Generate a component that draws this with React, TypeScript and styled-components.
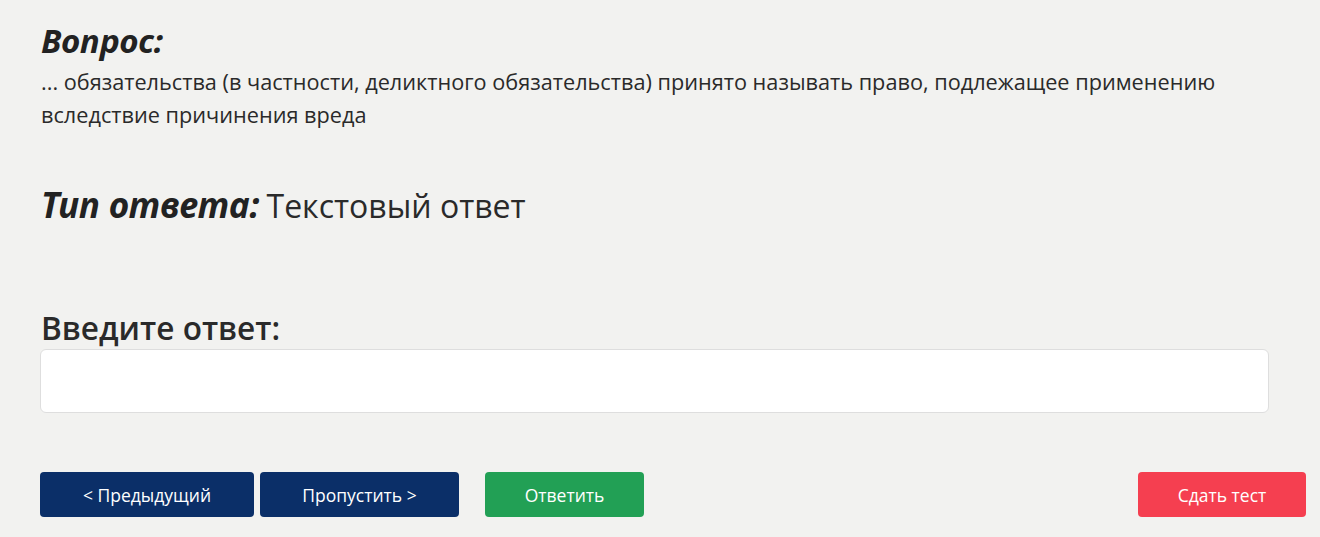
import React from "react";
import styled, { createGlobalStyle } from "styled-components";

const Global = createGlobalStyle`
  html, body { margin: 0; padding: 0; background: #f2f2f0; }
  body { font-family: "Open Sans", "Noto Sans", sans-serif; color: #222; }
`;

const Page = styled.div`
  padding: 22px 14px 20px 41px;
  box-sizing: border-box;
  width: 1320px;
  min-height: 537px;
`;

const Label = styled.span<{ $size: number }>`
  font-family: "Noto Sans", "Open Sans", sans-serif;
  font-style: italic;
  font-weight: 700;
  font-size: ${(p) => p.$size}px;
`;

const QuestionBlock = styled.section`
  display: flex;
  flex-direction: column;
`;

const QuestionTitle = styled.div`
  line-height: 36px;
  margin-top: 1px;
`;

const QuestionText = styled.p`
  margin: 0;
  font-size: 21.7px;
  line-height: 33px;
  width: 1240px;
  color: #2a2a2a;
`;

const TypeRow = styled.div`
  margin-top: 52px;
  display: flex;
  align-items: baseline;
  gap: 7px;
  line-height: 44px;
`;

const TypeValue = styled.span`
  font-size: 32px;
  color: #2a2a2a;
`;

const AnswerLabel = styled.label`
  display: block;
  margin-top: 80px;
  font-size: 31.6px;
  font-weight: 600;
  line-height: 40px;
  color: #2a2a2a;
`;

const AnswerInput = styled.input`
  display: block;
  box-sizing: border-box;
  margin: 1px 0 0 -1px;
  width: 1229px;
  height: 64px;
  border: 1px solid #dedede;
  border-radius: 6px;
  background: #fff;
  outline: none;
  font-size: 20px;
  padding: 0 14px;
`;

const ButtonRow = styled.div`
  margin-top: 59px;
  margin-left: -1px;
  display: flex;
  align-items: center;
`;

const Button = styled.button<{ $bg: string; $w: number; $ml?: number }>`
  width: ${(p) => p.$w}px;
  height: 45px;
  margin-left: ${(p) => p.$ml ?? 0}px;
  background: ${(p) => p.$bg};
  color: #fff;
  border: none;
  border-radius: 4px;
  font-family: "Open Sans", "Noto Sans", sans-serif;
  font-size: 17.5px;
  cursor: pointer;
`;

const Spacer = styled.div`
  flex: 1;
`;

export default function App() {
  return (
    <>
      <Global />
      <Page>
        <QuestionBlock>
          <QuestionTitle>
            <Label $size={33}>Вопрос:</Label>
          </QuestionTitle>
          <QuestionText>
            ... обязательства (в частности, деликтного обязательства) принято называть право, подлежащее применению
            <br />
            вследствие причинения вреда
          </QuestionText>
        </QuestionBlock>
        <TypeRow>
          <Label $size={35}>Тип ответа:</Label>
          <TypeValue>Текстовый ответ</TypeValue>
        </TypeRow>
        <AnswerLabel htmlFor="answer">Введите ответ:</AnswerLabel>
        <AnswerInput id="answer" type="text" />
        <ButtonRow>
          <Button $bg="#0b2f68" $w={214}>&lt; Предыдущий</Button>
          <Button $bg="#0b2f68" $w={199} $ml={6}>Пропустить &gt;</Button>
          <Button $bg="#22a055" $w={159} $ml={26}>Ответить</Button>
          <Spacer />
          <Button $bg="#f53f50" $w={168}>Сдать тест</Button>
        </ButtonRow>
      </Page>
    </>
  );
}
